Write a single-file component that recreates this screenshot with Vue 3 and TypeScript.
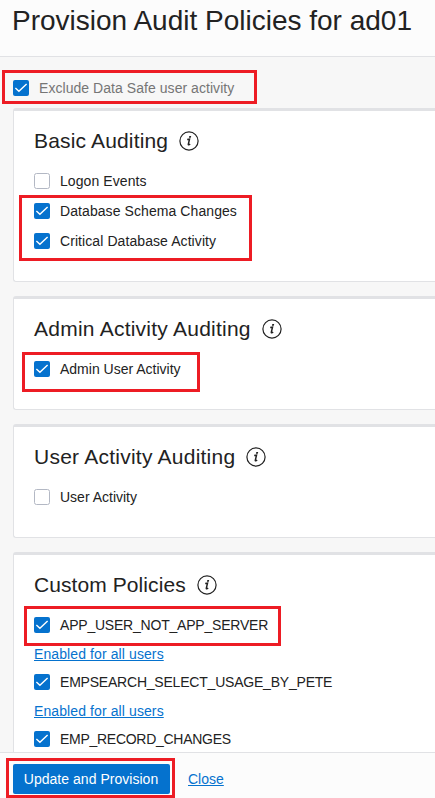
<script setup lang="ts">
import { ref } from 'vue'

interface Policy {
  name: string
  enabled: boolean
  tone?: string
  link?: string
}

interface Section {
  title: string
  tone: string
  mark?: string
  policies: Policy[]
}

const excludeActivity = ref(true)

const sections = ref<Section[]>([
  {
    title: 'Basic Auditing',
    tone: 'wide',
    mark: 'mark-basic',
    policies: [
      { name: 'Logon Events', enabled: false, tone: 'loose' },
      { name: 'Database Schema Changes', enabled: true, tone: 'loose' },
      { name: 'Critical Database Activity', enabled: true, tone: 'loose' },
    ],
  },
  {
    title: 'Admin Activity Auditing',
    tone: 'wider',
    mark: 'mark-admin',
    policies: [{ name: 'Admin User Activity', enabled: true }],
  },
  {
    title: 'User Activity Auditing',
    tone: 'wider',
    policies: [{ name: 'User Activity', enabled: false }],
  },
  {
    title: 'Custom Policies',
    tone: 'loose',
    mark: 'mark-custom',
    policies: [
      { name: 'APP_USER_NOT_APP_SERVER', enabled: true, tone: 'tight', link: 'Enabled for all users' },
      { name: 'EMPSEARCH_SELECT_USAGE_BY_PETE', enabled: true, tone: 'tight', link: 'Enabled for all users' },
      { name: 'EMP_RECORD_CHANGES', enabled: true, tone: 'tighter' },
    ],
  },
])
</script>

<template>
  <div class="dialog">
    <header class="header">
      <h1 class="title">Provision Audit Policies for ad01</h1>
    </header>

    <main class="body">
      <div class="exclude">
        <label class="check muted">
          <input v-model="excludeActivity" class="native" type="checkbox" />
          <svg class="box" viewBox="0 0 16 16">
            <rect v-if="excludeActivity" class="fill" width="16" height="16" rx="2" />
            <rect v-else class="empty" x="0.5" y="0.5" width="15" height="15" rx="2" />
            <path v-if="excludeActivity" class="tick" d="M2.4 7.9 5.9 11.3 13.6 3.9" />
          </svg>
          <span>Exclude Data Safe user activity</span>
        </label>
        <span class="mark mark-exclude"></span>
      </div>

      <section v-for="section in sections" :key="section.title" class="card">
        <h2 class="heading">
          <span :class="section.tone">{{ section.title }}</span>
          <svg class="info" viewBox="0 0 20 20">
            <circle cx="10" cy="10" r="9.1" />
            <path class="dot" d="M10.3 4.9h1.9l-.4 1.8H9.9z" />
            <path class="stem" d="M8.2 8.6 10.5 8.2 9.3 13.3Q9.2 14.3 11.2 13.1" />
          </svg>
        </h2>
        <div v-for="policy in section.policies" :key="policy.name" class="policy">
          <label class="check">
            <input v-model="policy.enabled" class="native" type="checkbox" />
            <svg class="box" viewBox="0 0 16 16">
              <rect v-if="policy.enabled" class="fill" width="16" height="16" rx="2" />
              <rect v-else class="empty" x="0.5" y="0.5" width="15" height="15" rx="2" />
              <path v-if="policy.enabled" class="tick" d="M2.4 7.9 5.9 11.3 13.6 3.9" />
            </svg>
            <span :class="policy.tone">{{ policy.name }}</span>
          </label>
          <a v-if="policy.link" class="link scope" href="#">{{ policy.link }}</a>
        </div>
        <span v-if="section.mark" class="mark" :class="section.mark"></span>
      </section>
    </main>

    <footer class="footer">
      <button class="primary" type="button">Update and Provision</button>
      <a class="link" href="#">Close</a>
      <span class="mark mark-submit"></span>
    </footer>
  </div>
</template>

<style>
body {
  margin: 0;
  overflow: hidden;
}
</style>

<style scoped>
.dialog {
  display: flex;
  flex-direction: column;
  height: 798px;
  overflow: hidden;
  background: #f7f7f7;
  color: #222;
  font: 14px/20px "Liberation Sans", Arial, sans-serif;
}
.header {
  flex: none;
  box-sizing: border-box;
  height: 57px;
  padding: 5px 13px 0 12px;
  border-bottom: 1px solid #e1e2e5;
  background: #fcfcfc;
}
.title {
  margin: 0;
  font-size: 28px;
  font-weight: 400;
  line-height: 32px;
  white-space: nowrap;
}
.body {
  flex: 1;
  display: flex;
  flex-direction: column;
  gap: 14px;
  min-height: 0;
  padding: 16px 0 0 13px;
  overflow: hidden;
}
.exclude {
  flex: none;
  position: relative;
  height: 21px;
  letter-spacing: 0.05px;
}
.exclude .check {
  height: 30px;
}
.card {
  flex: none;
  position: relative;
  box-sizing: border-box;
  padding: 16px 20px 25px;
  border: 1px solid #e1e2e5;
  border-top-width: 3px;
  border-right: 0;
  border-radius: 3px 0 0 3px;
  background: #fff;
}
.heading {
  display: flex;
  align-items: center;
  gap: 11px;
  height: 28px;
  margin: 0 0 11px;
  font-size: 21px;
  font-weight: 400;
  line-height: 28px;
  white-space: nowrap;
}
.wide {
  letter-spacing: 0.16px;
}
.wider {
  letter-spacing: 0.24px;
}
.loose {
  letter-spacing: 0.08px;
}
.tight {
  letter-spacing: -0.21px;
}
.tighter {
  letter-spacing: -0.28px;
}
.info {
  width: 20px;
  height: 20px;
  fill: none;
  stroke: #222;
  stroke-width: 1.2;
}
.info .dot {
  fill: #222;
  stroke: none;
}
.info .stem {
  stroke-width: 1.5;
}
.check {
  display: flex;
  align-items: center;
  gap: 10px;
  height: 30px;
  white-space: nowrap;
}
.muted {
  color: #757575;
}
.native {
  position: absolute;
  opacity: 0;
  pointer-events: none;
}
.box {
  flex: none;
  width: 16px;
  height: 16px;
}
.fill {
  fill: #0572ce;
}
.empty {
  fill: #fff;
  stroke: #b3b8c4;
}
.tick {
  fill: none;
  stroke: #fff;
  stroke-width: 1.4;
}
.link {
  color: #0572ce;
  text-decoration: underline;
}
.scope {
  display: block;
  height: 27px;
  line-height: 28px;
  letter-spacing: 0.1px;
}
.footer {
  flex: none;
  position: relative;
  box-sizing: border-box;
  display: flex;
  align-items: flex-start;
  gap: 18px;
  height: 46px;
  padding: 11px 13px 0;
  border-top: 1px solid #e1e2e5;
  background: #fcfcfc;
}
.footer .link {
  line-height: 30px;
}
.primary {
  width: 157px;
  height: 30px;
  padding: 0 1px 0 0;
  border: 0;
  border-radius: 2px;
  background: #0572ce;
  color: #fff;
  font: inherit;
  letter-spacing: 0.03px;
  white-space: nowrap;
}
.mark {
  position: absolute;
  box-sizing: border-box;
  border: 3px solid #ed1c24;
  pointer-events: none;
}
.mark-exclude {
  top: -3px;
  left: -11px;
  width: 255px;
  height: 34px;
}
.mark-basic {
  top: 84px;
  left: 5px;
  width: 233px;
  height: 66px;
}
.mark-admin {
  top: 53px;
  left: 8px;
  width: 178px;
  height: 40px;
}
.mark-custom {
  top: 51px;
  left: 10px;
  width: 257px;
  height: 40px;
}
.mark-submit {
  top: 5px;
  left: 6px;
  width: 169px;
  height: 40px;
}
</style>
